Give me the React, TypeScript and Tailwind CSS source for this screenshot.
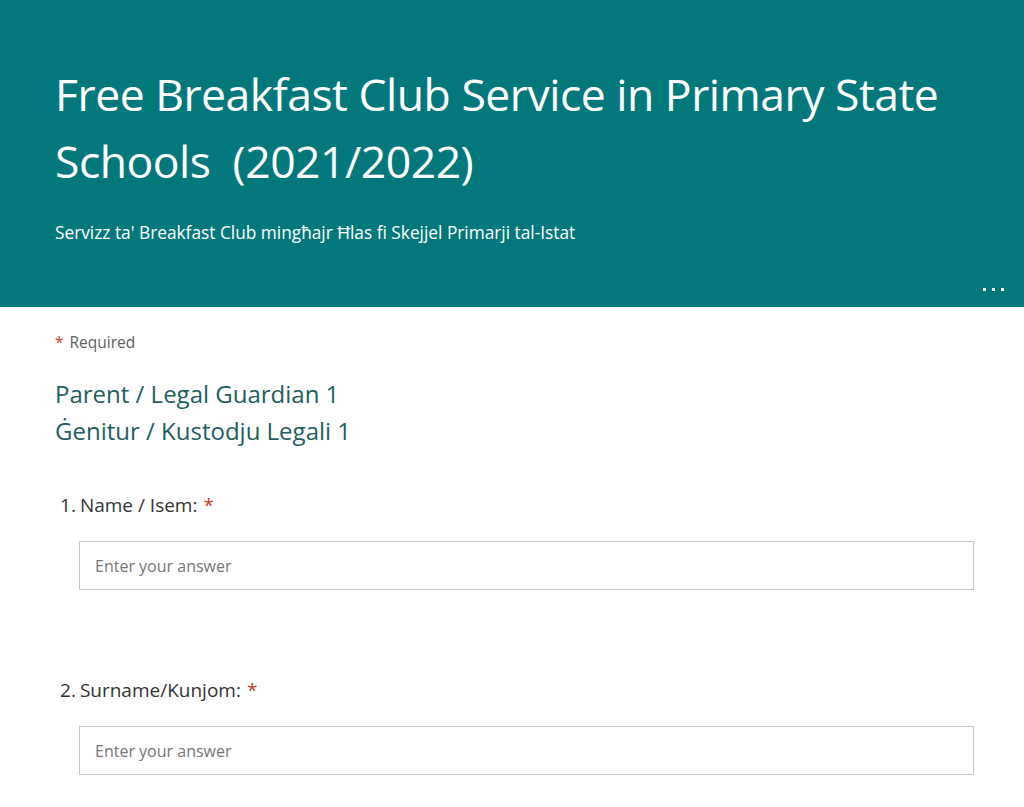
export default function App() {
  const font = { fontFamily: '"Open Sans", "Noto Sans", sans-serif' };
  return (
    <div className="min-h-[807px] w-[1024px] bg-white" style={font}>
      {/* Header banner */}
      <div className="relative h-[307px] bg-[#03787c] px-[55px] pt-[60px] text-white">
        <h1 className="text-[44.5px] font-normal leading-[67px] tracking-[-0.5px]">
          Free Breakfast Club Service in Primary State Schools&nbsp; (2021/2022)
        </h1>
        <p className="mt-[28px] text-[17.3px] leading-[22px]">
          Servizz ta' Breakfast Club mingħajr Ħlas fi Skejjel Primarji tal-Istat
        </p>
        <div className="absolute bottom-[16px] right-[20px] flex gap-[6px]">
          <span className="h-[3px] w-[3px] bg-white" />
          <span className="h-[3px] w-[3px] bg-white" />
          <span className="h-[3px] w-[3px] bg-white" />
        </div>
      </div>

      {/* Body */}
      <div className="px-[55px] pt-[24px]">
        <div className="text-[15.5px] leading-[22px] text-[#605e5c]">
          <span className="mr-[6px] text-[#c43e1c]">*</span>Required
        </div>

        <div className="mt-[22px] text-[24px] leading-[37px] text-[#1e5e60]">
          <div>Parent / Legal Guardian 1</div>
          <div>Ġenitur / Kustodju Legali 1</div>
        </div>

        <Question n={1} label="Name / Isem:" className="mt-[43px]" />
        <Question n={2} label="Surname/Kunjom:" className="mt-[87px]" />
      </div>
    </div>
  );
}

function Question({ n, label, className }: { n: number; label: string; className?: string }) {
  return (
    <div className={className}>
      <div className="flex h-[26px] items-baseline pl-[5px] text-[19px] leading-[26px] text-[#333]">
        <span className="mr-[4px]">{n}.</span>
        <span>{label}</span>
        <span className="ml-[6px] text-[#c43e1c]">*</span>
      </div>
      <div className="ml-[24px] mt-[23px] flex h-[49px] w-[895px] items-center border border-[#c8c6c4] px-[15px]">
        <input
          placeholder="Enter your answer"
          className="w-full bg-transparent text-[16px] text-[#333] outline-none placeholder:text-[#767676]"
        />
      </div>
    </div>
  );
}
